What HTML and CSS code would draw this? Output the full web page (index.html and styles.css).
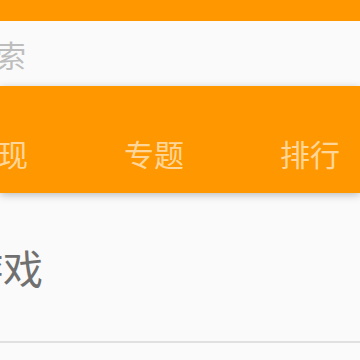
FILE: index.html
```html
<!DOCTYPE html>
<html lang="zh">
<head>
<meta charset="utf-8">
<link rel="stylesheet" href="styles.css">
</head>
<body>
<div class="app">
  <div class="status"></div>
  <div class="search"><span class="placeholder">搜索</span></div>
  <div class="toolbar">
    <div class="tabs">
      <div class="tab">发现</div>
      <div class="tab">专题</div>
      <div class="tab">排行</div>
      <div class="tab">分类</div>
    </div>
  </div>
  <div class="content">
    <div class="row"><span class="row-title">游戏</span></div>
  </div>
</div>
</body>
</html>
```
FILE: styles.css
```css
html, body {
  margin: 0;
  padding: 0;
  background: #fafafa;
  overflow: hidden;
}
body {
  width: 360px;
  height: 360px;
  font-family: "Noto Sans CJK SC", "Noto Sans", sans-serif;
}
.app {
  display: flex;
  flex-direction: column;
  width: 360px;
  height: 360px;
  overflow: hidden;
}
.status {
  height: 21px;
  background: #ff9800;
}
.search {
  height: 65px;
  background: #fafafa;
  display: flex;
  align-items: center;
}
.placeholder {
  margin-left: -34px;
  font-size: 30px;
  line-height: 1;
  color: #bdbdbd;
  white-space: nowrap;
}
.toolbar {
  height: 107px;
  background: #ff9800;
  display: flex;
  flex-direction: column;
  justify-content: flex-end;
  box-shadow: 0 2px 8px rgba(0,0,0,0.25);
  position: relative;
  z-index: 1;
}
.tabs {
  display: flex;
  height: 80px;
  margin-left: -80px;
}
.tab {
  flex: 0 0 156px;
  display: flex;
  align-items: center;
  justify-content: center;
  font-size: 30px;
  line-height: 1;
  color: #ffd699;
  white-space: nowrap;
}
.content {
  flex: 1;
  background: #fafafa;
}
.row {
  height: 148px;
  display: flex;
  align-items: center;
  border-bottom: 2px solid #e0e0e0;
}
.row-title {
  margin-left: -37px;
  font-size: 40px;
  line-height: 1;
  color: #707070;
  white-space: nowrap;
}
```
